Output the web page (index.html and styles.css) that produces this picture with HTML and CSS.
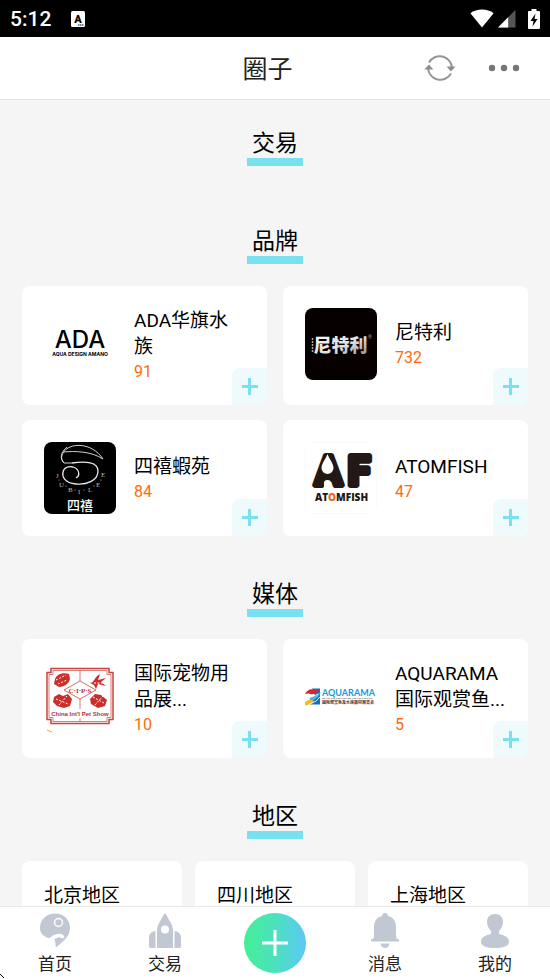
FILE: index.html
```html
<!DOCTYPE html>
<html lang="zh-CN">
<head>
<meta charset="utf-8">
<meta name="viewport" content="width=device-width, initial-scale=1">
<title>圈子</title>
<link rel="stylesheet" href="styles.css">
</head>
<body>
<div class="app">
  <div class="status">
    <span class="time">5:12</span>
    <svg class="status-app" width="14" height="16" viewBox="0 0 14 16"><rect width="14" height="16" rx="1.5" fill="#fff"/><text x="7" y="11.500" text-anchor="middle" class="status-letter">A</text><path d="M7 14h5.500" stroke="#000" stroke-width="1" stroke-dasharray="1.500 .5"/></svg>
    <span class="status-right">
      <svg width="24" height="19" viewBox="0 0 24 19"><path d="M12 18.500.4 4.200C6.500-.7 17.500-.7 23.600 4.200Z" fill="#fff"/></svg>
      <svg width="18" height="19" viewBox="0 0 18 19"><path d="M17.500.8V18.500H0Z" fill="#555"/><path d="M10.200 8.200V18.500H0Z" fill="#fff"/></svg>
      <svg class="battery" width="12" height="20" viewBox="0 0 12 20"><path d="M3.500 0h5v2H11a1 1 0 0 1 1 1v16a1 1 0 0 1-1 1H1a1 1 0 0 1-1-1V3a1 1 0 0 1 1-1h2.500Z" fill="#fff"/><path d="M7.500 4.500 2.500 12H5.500L4.500 17.500 9.500 10H6.500Z" fill="#000"/></svg>
    </span>
  </div>

  <header class="header">
    <h1 class="title">圈子</h1>
    <div class="actions">
      <button class="icon-btn" type="button" aria-label="刷新">
        <svg width="32" height="28" viewBox="0 0 32 28" fill="none"><path d="M5 8.500A12.300 12.300 0 0 1 28 14M27 19.500A12.300 12.300 0 0 1 4 14" stroke="#969696" stroke-width="2"/><path d="M22.500 12.500h9L27 17.500ZM.3 15.500h9L5 10.500Z" fill="#8d8d8d"/></svg>
      </button>
      <button class="icon-btn" type="button" aria-label="更多">
        <svg width="32" height="8" viewBox="0 0 32 8" fill="#777"><circle cx="4" cy="4" r="3.200"/><circle cx="16" cy="4" r="3.200"/><circle cx="28" cy="4" r="3.200"/></svg>
      </button>
    </div>
  </header>

  <main class="content">
    <section>
      <h2 class="heading"><span>交易</span></h2>
      <div class="empty"></div>
    </section>

    <section>
      <h2 class="heading"><span>品牌</span></h2>
      <div class="cards">
        <article class="card">
          <svg class="logo" viewBox="0 0 72 72"><text x="36" y="40" text-anchor="middle" class="ada">ADA</text><text x="36" y="48" text-anchor="middle" class="ada-sub">AQUA DESIGN AMANO</text></svg>
          <div class="info"><a class="name" href="#">ADA华旗水族</a><span class="count">91</span></div>
          <button class="add" type="button" aria-label="加入"></button>
        </article>
        <article class="card">
          <svg class="logo" viewBox="0 0 72 72">
            <defs><linearGradient id="silver" x2="1" y2="1"><stop stop-color="#fff"/><stop offset=".6" stop-color="#ddd"/><stop offset="1" stop-color="#888"/></linearGradient></defs>
            <rect width="72" height="72" fill="#070001"/><path d="M7.500 30v15" stroke="#aaa" stroke-width="1.500" stroke-dasharray="2 1"/><text x="35.500" y="43.500" text-anchor="middle" class="neet" fill="url(#silver)">尼特利</text><text x="63" y="31" class="reg">®</text>
          </svg>
          <div class="info"><a class="name" href="#">尼特利</a><span class="count">732</span></div>
          <button class="add" type="button" aria-label="加入"></button>
        </article>
        <article class="card">
          <svg class="logo" viewBox="0 0 72 72">
            <rect width="72" height="72" fill="#000"/>
            <g fill="none" stroke="#e8e8e8"><path d="M59 17C48 0 25 0 19 11c-2 4-2 7 1 10M59 17C47 9 30 9 20 10M23 5c-7 6-7 11-3 16M20 21h8" stroke-width=".9"/><path d="M28 21C42 19 54 20 54 29 54 39 42 43 32 42 20 41 18 34 19 30c1-5 6-6 10-5 7 2 7 9 3 11" stroke-width="1.300"/></g>
            <g class="jubilee"><text x="12" y="36">J</text><text x="15" y="45">U</text><text x="24" y="50">B</text><text x="34" y="52">I</text><text x="44" y="50">L</text><text x="52" y="45">E</text><text x="57" y="35">E</text></g>
            <g fill="#bbb"><circle cx="15" cy="38" r=".6"/><circle cx="22" cy="44" r=".6"/><circle cx="31" cy="48" r=".6"/><circle cx="40" cy="48" r=".6"/><circle cx="50" cy="44" r=".6"/><circle cx="57" cy="38" r=".6"/></g>
            <text x="36" y="68" text-anchor="middle" class="sixi">四禧</text>
          </svg>
          <div class="info"><a class="name" href="#">四禧蝦苑</a><span class="count">84</span></div>
          <button class="add" type="button" aria-label="加入"></button>
        </article>
        <article class="card">
          <svg class="logo" viewBox="0 0 72 72">
            <rect x=".5" y=".5" width="71" height="71" rx="6" fill="#fff" stroke="#fafafa"/>
            <text y="43" class="af"><tspan x="10">A</tspan><tspan x="43">F</tspan></text>
            <path d="M22.500 12C21 17 16.500 21 16.500 26a6 6 0 0 0 12 0C28.500 21 24 17 22.500 12ZM19 48v-7q0-3 3.500-3t3.500 3v7Z" fill="#fff"/>
            <text x="36.500" y="59" text-anchor="middle" class="atom">AT<tspan fill="#f26322">O</tspan>MFISH</text>
          </svg>
          <div class="info"><a class="name" href="#">ATOMFISH</a><span class="count">47</span></div>
          <button class="add" type="button" aria-label="加入"></button>
        </article>
      </div>
    </section>

    <section>
      <h2 class="heading"><span>媒体</span></h2>
      <div class="cards">
        <article class="card">
          <svg class="logo" viewBox="0 0 72 72">
            <g fill="none" stroke="#c8453f"><path d="M7 7.500h58v4h4v47h-4v4H7v-4H3v-47h4Z" stroke-width="1.500"/><path d="M9 9.500h54v4h4v43h-4v4H9v-4H5v-43h4ZM36 9v11M36 38v10M36 57v4" stroke-width=".7"/><path d="m36 20 16 9-16 9-16-9Z" stroke-width=".8"/></g>
            <g fill="#c9302c"><path d="M11 18c2-5 8-7 14-5l1 5c-1 4-5 8-11 8l-5-3ZM10 36l5-3 4 2 5-2 4 5-2 7-6 2-7-2-4-4ZM46 38l5-5 6 1 6 5-2 6-7 2-7-4Z"/><path d="M46 22c4 0 5-7 10-9l-2 6 8-2-5 4 5 4-8-2-2 5-2-4Z"/></g>
            <path d="m12 19 10-5M14 23l9-4M12 38l12 5M15 44l8-9M49 36l11 6M51 44l8-9M50 22h9" stroke="#fff" stroke-width="1" stroke-dasharray="2 1.500"/>
            <text x="36" y="32" text-anchor="middle" class="cips">C·I·P·S</text><text x="36" y="55" text-anchor="middle" class="petshow">China Int'l Pet Show</text><path d="m3 69 5 2" stroke="#e9a83a"/>
          </svg>
          <div class="info"><a class="name" href="#">国际宠物用品展...</a><span class="count">10</span></div>
          <button class="add" type="button" aria-label="加入"></button>
        </article>
        <article class="card">
          <svg class="logo" viewBox="0 0 72 72">
            <path d="M7 27.500h8v16H4v-4l6-5Z" fill="#1773b8"/><path d="M0 33c2-4 6-6 10-4l5-1-4 4c-4 3-7-1-11 1Z" fill="#d9252b"/><path d="m4 37 7-3 5-3-3 5-6 4Z" fill="#45b9e8"/><path d="M0 41c3-3 7-2 9-1-1 3-6 5-9 4Z" fill="#f5bd21"/><path d="m2 37 7-2 4-2M3 44l8-4 4-4" stroke="#fff" stroke-width=".8" fill="none"/>
            <text x="17" y="35" class="aqua">AQUARAMA</text><path d="M17 37.500h51" stroke="#999" stroke-width=".8" stroke-dasharray="3 .7 1 .5"/><text x="17" y="43" class="aqua-sub">国际观赏鱼及水族器材展览会</text>
          </svg>
          <div class="info"><a class="name" href="#">AQUARAMA国际观赏鱼...</a><span class="count">5</span></div>
          <button class="add" type="button" aria-label="加入"></button>
        </article>
      </div>
    </section>

    <section>
      <h2 class="heading"><span>地区</span></h2>
      <div class="regions">
        <a class="region" href="#">北京地区</a>
        <a class="region" href="#">四川地区</a>
        <a class="region" href="#">上海地区</a>
      </div>
    </section>
  </main>

  <nav class="tabs">
    <a class="tab" href="#"><svg width="32" height="36" viewBox="0 0 32 36"><path fill="#c2c8d3" d="M1 15C1 6 8 .5 16.500.5S31 7 31 15c0 8-6 13-14 19.500-1-3 0-6-2-9l-6-.5C4 23 1 20 1 15Z"/><circle cx="19.500" cy="9.500" r="4" fill="none" stroke="#fff" stroke-width="1.500"/><path d="M8 26c4-1 6-5 11-5 3-1 6 0 6.500 3.500-2 1.500-4 0-5.500-.5-2 1-4 2-6 2Z" fill="#fff"/></svg><span>首页</span></a>
    <a class="tab" href="#"><svg width="32" height="36" viewBox="0 0 32 36"><path fill="#c2c8d3" d="M16 .5c1.500 0 2.500 4 4.500 7C23 11.500 24 14 24 18v17H8V18c0-4 1-6.500 3.500-10.500 2-3 3-7 4.500-7ZM6.500 18v17H1.500q-1.500 0-1.500-2V25c0-4 2-6.500 6.500-7ZM25.500 18v17h5q1.500 0 1.500-2V25c0-4-2-6.500-6.500-7Z"/><circle cx="16" cy="16.500" r="4" fill="#fff"/></svg><span>交易</span></a>
    <button class="publish" type="button" aria-label="发布"><svg width="28" height="28" viewBox="0 0 28 28"><path d="M14 1v26M1 14h26" stroke="#fff" stroke-width="3"/></svg></button>
    <a class="tab" href="#"><svg width="32" height="36" viewBox="0 0 32 36" fill="#c2c8d3"><path d="M16 0c2 0 3 1 3 3 5 1 8 5 8 11v8c0 3 .5 4 3 4.500V28.500H2V26.500c2.500-.5 3-1.500 3-4.500v-8C5 8 8 4 13 3c0-2 1-3 3-3ZM11.500 30.500h9c-1 6-8 6-9 0Z"/></svg><span>消息</span></a>
    <a class="tab" href="#"><svg width="32" height="36" viewBox="0 0 32 36" fill="#c2c8d3"><path d="M16 1c5 0 8 3 8 8 0 4-2 7-4 9v3c5 1 10 3 10 8 0 4-6 6-14 6S2 33 2 29c0-5 5-7 10-8v-3c-2-2-4-5-4-9 0-5 3-8 8-8Z"/></svg><span>我的</span></a>
  </nav>
  <svg class="pointer" width="4" height="5" viewBox="0 0 4 5"><path d="M0 0h1v1h1v1h1v1h1v1H3V3H2V2H1V1H0Z" fill="#000"/></svg>
</div>
</body>
</html>
```
FILE: styles.css
```css
* { box-sizing: border-box; }

body {
  margin: 0;
  font-family: Roboto, "Noto Sans CJK SC", sans-serif;
  color: #000;
  background: #f5f5f5;
}

a { color: inherit; text-decoration: none; }
button { border: 0; padding: 0; background: none; font: inherit; }
svg { display: block; }
h1, h2 { margin: 0; font-weight: 400; }

.app {
  height: 100vh;
  display: flex;
  flex-direction: column;
  overflow: hidden;
}

/* Status bar */
.status {
  flex: none;
  height: 37px;
  padding: 0 10px;
  display: flex;
  align-items: center;
  gap: 20px;
  background: #000;
  color: #fff;
}
.time { font-size: 21px; font-weight: 500; line-height: 24px; }
.status-letter { font: 900 11px Roboto, sans-serif; }
.status-right { margin-left: auto; display: flex; align-items: center; gap: 4px; }
.battery { margin-left: 8px; }

/* Header */
.header {
  flex: none;
  height: 63px;
  padding: 0 30px 0 15px;
  display: grid;
  grid-template-columns: 1fr auto 1fr;
  align-items: center;
  background: #fff;
  border-bottom: 1px solid #e6e6e6;
}
.title { grid-column: 2; padding-top: 4px; font-size: 25px; line-height: 36px; color: #222; }
.actions { display: flex; justify-content: flex-end; align-items: center; gap: 32px; }

/* Content */
.content {
  flex: 1;
  min-height: 0;
  padding: 0 22px;
  overflow: hidden;
}
.heading {
  padding: 30px 0 22px;
  display: flex;
  justify-content: center;
  font-size: 23px;
  line-height: 28px;
}
.heading span { padding: 0 5px; border-bottom: 8px solid #78e0ee; }
.empty { height: 10px; }

.cards {
  display: grid;
  grid-template-columns: repeat(2, minmax(0, 1fr));
  gap: 15px 16px;
  padding-bottom: 15px;
}
.card {
  position: relative;
  display: flex;
  align-items: flex-start;
  gap: 18px;
  padding: 22px;
  background: #fff;
  border-radius: 8px;
  overflow: hidden;
}
.logo { flex: none; width: 72px; height: 72px; border-radius: 8px; }
.info {
  flex: 1;
  min-width: 0;
  min-height: 72px;
  display: flex;
  flex-direction: column;
  justify-content: center;
}
.name { font-size: 19px; line-height: 26px; }
.count { font-size: 16px; line-height: 23px; color: #ff6a0a; }
.add {
  position: absolute;
  right: 0;
  bottom: 0;
  width: 35px;
  height: 37px;
  border-radius: 8px 0 0 0;
  background:
    linear-gradient(#78e0ee, #78e0ee) center / 16px 3px no-repeat,
    linear-gradient(#78e0ee, #78e0ee) center / 3px 17px no-repeat,
    #eefafc;
}

.regions { display: grid; grid-template-columns: repeat(3, minmax(0, 1fr)); gap: 13px; }
.region {
  padding: 22px;
  background: #fff;
  border-radius: 8px;
  font-size: 19px;
  line-height: 26px;
}

/* Logo lettering */
.ada { font: 500 24px Inter, sans-serif; }
.ada-sub { font: 700 5px Inter, sans-serif; }
.neet { font: 900 18px "Noto Sans CJK SC", sans-serif; }
.reg { font: 5px Roboto, sans-serif; fill: #999; }
.jubilee { font: 7px "Liberation Serif", serif; fill: #bbb; }
.sixi { font: 500 13px "Noto Sans CJK SC", sans-serif; fill: #fff; }
.af {
  font: 700 40px Roboto, sans-serif;
  fill: #231815;
  stroke: #231815;
  stroke-width: 6px;
  stroke-linejoin: round;
}
.atom { font: 900 10px "Open Sans", sans-serif; fill: #231815; }
.cips { font: 700 7px "Liberation Serif", serif; fill: #b8322d; }
.petshow { font: 700 6px "Liberation Sans", sans-serif; fill: #b8322d; }
.aqua { font: 700 9px Lato, sans-serif; fill: #159bdc; }
.aqua-sub { font: 700 4px "Noto Sans CJK SC", sans-serif; fill: #4b3029; }

/* Bottom navigation */
.tabs {
  flex: none;
  height: 73px;
  display: grid;
  grid-template-columns: repeat(5, minmax(0, 1fr));
  justify-items: center;
  align-items: start;
  padding-top: 6px;
  background: #fff;
  border-top: 1px solid #e9e9e9;
}
.tab {
  display: flex;
  flex-direction: column;
  align-items: center;
  gap: 2px;
  font-size: 17px;
  line-height: 26px;
  color: #222;
}
.publish {
  width: 62px;
  height: 60px;
  display: grid;
  place-items: center;
  border-radius: 50%;
  background: linear-gradient(90deg, #43ef96, #4ce1bd 50%, #5bc9f6);
}
.pointer { position: absolute; left: 0; bottom: 0; }
```
